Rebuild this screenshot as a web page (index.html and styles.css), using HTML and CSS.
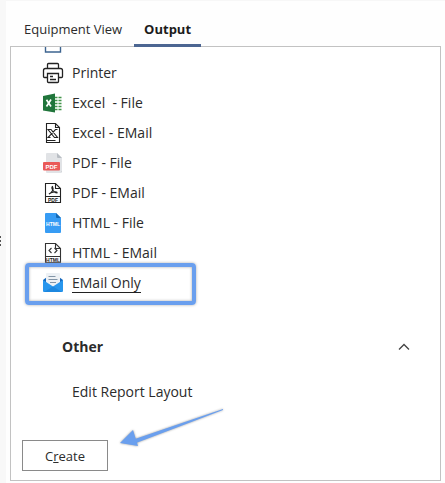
FILE: index.html
```html
<!DOCTYPE html>
<html lang="en">
<head>
<meta charset="utf-8">
<title>Output</title>
<link rel="stylesheet" href="styles.css">
</head>
<body>
<div class="splitter"><span class="grip"></span></div>
<main class="pane">
  <nav class="tabs">
    <button class="tab">Equipment View</button>
    <button class="tab active">Output</button>
  </nav>
  <section class="panel">
    <div class="scroll">
      <ul class="outputs">
        <li><button class="item" aria-label="Screen"><svg class="icon" viewBox="0 0 22 22" fill="none" stroke="#3d6490" stroke-width="1.4"><path d="M3.5 4v16h15V4z"/></svg></button></li>
        <li><button class="item"><svg class="icon" viewBox="0 0 22 22" fill="none" stroke="#222" stroke-width="1.3"><path d="M5.5 6.500V2.500q0-1 1-1h9q1 0 1 1v4M5 15.500H2.500q-1 0-1-1v-6q0-2 2-2h15q2 0 2 2v6q0 1-1 1H17"/><path d="M5.500 11.500h11v8q0 1-1 1h-9q-1 0-1-1z"/><path d="M8 14.500h3M8 17.500h6"/></svg>Printer</button></li>
        <li><button class="item"><svg class="icon" viewBox="0 0 22 22"><path d="M13 5h6.500v13H13z" fill="#fff"/><path d="M13 5.500h2.500m1 0h3M13 8.500h2.500m1 0h3M13 11.500h2.500m1 0h3M13 14.500h2.500m1 0h3M13 17.500h2.500m1 0h3" stroke="#419449" stroke-width="1.5"/><path d="M1 4l12-2.500v19L1 18.500z" fill="#20753b"/><path d="M4.500 7.800l4.500 6.700M9 7.500l-4.500 7" stroke="#fff" stroke-width="1.700"/></svg>Excel&nbsp; - File</button></li>
        <li><button class="item"><svg class="icon" viewBox="0 0 22 22" fill="none" stroke="#222" stroke-width="1.100"><path d="M4.500 1.500h9l4 4v15h-13zM13.500 1.500v4h4"/><path d="M6 7.500h3l6.500 8h-3zM15.500 7.500h-2l-7.500 8h2.500M4.500 18.500h9"/></svg>Excel - EMail</button></li>
        <li><button class="item"><svg class="icon" viewBox="0 0 22 22"><path d="M5 1h10l5 5v14q0 1-1 1H5q-1 0-1-1V2q0-1 1-1z" fill="#e1e3e6"/><path d="M15 1v4q0 1 1 1h4z" fill="#b8bdc3"/><path d="M4 19h15l1 1v-1z" fill="#c5c8cc"/><rect x="1" y="10" width="17" height="8.500" rx="1" fill="#ea5a58"/><text x="9.500" y="16.500" class="glyph white">PDF</text></svg>PDF - File</button></li>
        <li><button class="item"><svg class="icon" viewBox="0 0 22 22" fill="none" stroke="#222" stroke-width="1.100"><path d="M3.500 1.500h10l5 5v14h-15zM13.500 1.500v5h5M3.500 14.500h15"/><path d="M7 12c3-1 5-5 3.500-7.500-2 1 1 6 4.500 6.500 1-2-6-1-8 1z"/><text x="11" y="19.500" class="glyph dark">PDF</text></svg>PDF - EMail</button></li>
        <li><button class="item"><svg class="icon" viewBox="0 0 22 22"><path d="M4 1h10l5 5v14q0 1-1 1H4q-1 0-1-1V2q0-1 1-1z" fill="#379cf4"/><path d="M14 1v4q0 1 1 1h4z" fill="#1569b4"/><text x="11" y="13.500" class="glyph white small">HTML</text></svg>HTML - File</button></li>
        <li><button class="item"><svg class="icon" viewBox="0 0 22 22" fill="none" stroke="#333" stroke-width="1.100"><path d="M3.500 1.500h10l5 5v14h-15zM13.500 1.500v5h5M3.500 14.500h15"/><path d="M9.500 6L7 8.500 9.500 11M12.500 6L15 8.500 12.500 11"/><text x="11" y="19.500" class="glyph dark">HTML</text></svg>HTML - EMail</button></li>
        <li class="marked"><button class="item selected"><svg class="icon" viewBox="0 0 22 22"><path d="M1 8l4-3h12l4 3v5H1z" fill="#1769bd"/><path d="M5 1h12q1 0 1 1v13H4V2q0-1 1-1z" fill="#edf1f5"/><path d="M6.500 4.500h7M6.500 7.500h9M8 10.500h6" stroke="#8395a7"/><path d="M1 8l10 6.500L21 8v11q0 1-1 1H2q-1 0-1-1z" fill="#2896ed"/><path d="M2 20l9-5.500 9 5.500z" fill="#1d87df"/></svg><span>EMail Only</span></button></li>
      </ul>
      <section class="group">
        <h2 class="group-head"><button class="toggle" aria-expanded="true">Other<svg class="chevron" viewBox="0 0 12 8" fill="none" stroke="#444" stroke-width="1.300"><path d="M1 6.500l5-5 5 5"/></svg></button></h2>
        <button class="item plain">Edit Report Layout</button>
      </section>
    </div>
    <div class="actions">
      <button class="create">C<u>r</u>eate</button>
      <svg class="arrow" viewBox="0 0 110 46"><path d="M106 4L18 34l1 4L106 5z" fill="#6a9fee"/><path d="M3 38l13-13 5 16z" fill="#6a9fee"/></svg>
    </div>
  </section>
</main>
</body>
</html>
```
FILE: styles.css
```css
*,
*::after {
  box-sizing: border-box;
}

body {
  margin: 0;
  min-height: 100vh;
  display: grid;
  grid-template-columns: 6px 1fr;
  background: #fefefe;
  color: #2b2b2b;
  font: 14px/20px "Open Sans", "Noto Sans", sans-serif;
}

button {
  margin: 0;
  padding: 0;
  border: 0;
  background: none;
  color: inherit;
  font: inherit;
}

.splitter {
  display: flex;
  align-items: center;
  background: #f8f8f8;
}

.grip {
  width: 1px;
  height: 11px;
  background: repeating-linear-gradient(#555 0 2px, transparent 2px 4px);
}

.pane {
  display: flex;
  flex-direction: column;
  padding: 0 4px 2px;
  border-top: 1px solid #f7f7f7;
}

.tabs {
  display: flex;
  gap: 2px;
  padding: 13px 4px 0;
  margin-bottom: -1px;
  position: relative;
}

.tab {
  height: 33px;
  padding: 0 10px;
  border-bottom: 3px solid transparent;
  font-size: 13px;
}

.active {
  border-color: #4c6692;
  color: #1c1c1c;
  font-weight: 700;
}

.panel {
  flex: 1;
  display: flex;
  flex-direction: column;
  border: 1px solid #c2c2c2;
  background: #fff;
}

.scroll {
  flex: 1;
  overflow: hidden;
}

.outputs {
  list-style: none;
  margin: -19px 0 0;
  padding: 0 0 0 31px;
}

.item {
  display: flex;
  align-items: center;
  gap: 8px;
  height: 30px;
}

.icon {
  width: 22px;
  height: 22px;
}

.glyph {
  font: 700 6px "Liberation Sans", sans-serif;
  text-anchor: middle;
  stroke: none;
}

.white { fill: #fff; }

.dark { fill: #222; }

.dark,
.small {
  font-size: 5px;
}

.selected span {
  border-bottom: 1px solid #222;
  line-height: 18px;
}

.marked { position: relative; }

.marked::after {
  content: "";
  position: absolute;
  left: -17px;
  top: -5px;
  width: 171px;
  height: 42px;
  border: 4px solid #6a9fee;
  border-radius: 4px;
  box-shadow: 0 0 3px #aaa, inset 0 0 3px #aaa;
  pointer-events: none;
}

.group { padding: 34px 30px 0 51px; }

.group-head {
  margin: 0 0 15px;
  font: inherit;
}

.toggle {
  display: flex;
  align-items: center;
  justify-content: space-between;
  width: 100%;
  height: 30px;
  font-weight: 700;
}

.chevron {
  width: 12px;
  height: 8px;
}

.plain { margin-left: 10px; }

.actions {
  position: relative;
  padding: 0 11px 9px;
}

.create {
  display: block;
  width: 86px;
  height: 31px;
  border: 1px solid #8a8a8a;
  background: #fff;
  font-size: 13px;
}

.arrow {
  position: absolute;
  left: 106px;
  top: -35px;
  width: 110px;
  height: 46px;
  filter: drop-shadow(0 0 1px #999);
}
```
